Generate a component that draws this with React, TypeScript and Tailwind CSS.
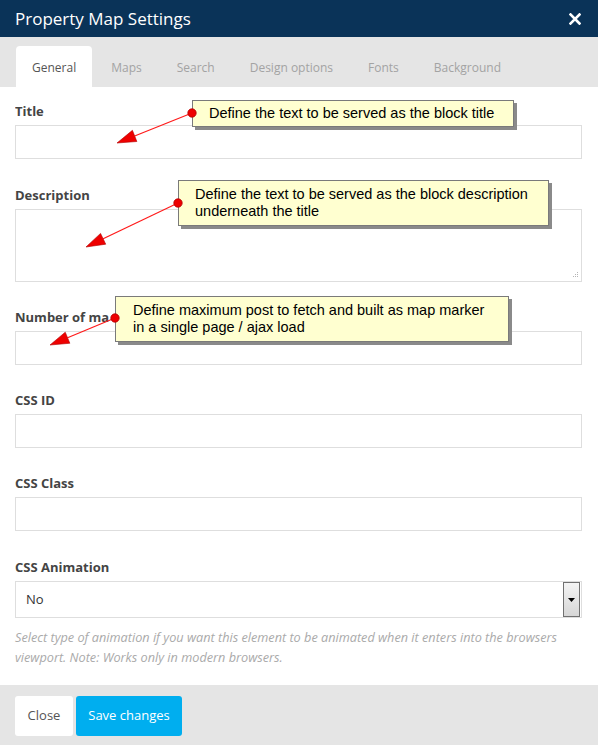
import React from 'react';

const tabs = ['General', 'Maps', 'Search', 'Design options', 'Fonts', 'Background'];

type Pt = [number, number];

const Arrow: React.FC<{ from: Pt; to: Pt }> = ({ from, to }) => {
  const dx = to[0] - from[0];
  const dy = to[1] - from[1];
  const len = Math.sqrt(dx * dx + dy * dy);
  const ux = dx / len;
  const uy = dy / len;
  const head = 19;
  const half = 6;
  const bx = to[0] - ux * head;
  const by = to[1] - uy * head;
  const p1 = `${bx - uy * half},${by + ux * half}`;
  const p2 = `${bx + uy * half},${by - ux * half}`;
  return (
    <g>
      <line x1={from[0]} y1={from[1]} x2={bx} y2={by} stroke="#ff1a1a" strokeWidth={1.2} />
      <polygon points={`${to[0]},${to[1]} ${p1} ${p2}`} fill="#ee0000" stroke="#b00000" strokeWidth={0.6} />
      <circle cx={from[0]} cy={from[1]} r={4.2} fill="#ee0000" stroke="#b00000" strokeWidth={0.8} />
    </g>
  );
};

const Field: React.FC<{ label: string; gap: string; children: React.ReactNode }> = ({ label, gap, children }) => (
  <div className={gap}>
    <label className="block h-5 leading-5 mb-1 text-[13px] font-bold text-[#444] whitespace-nowrap overflow-hidden">{label}</label>
    {children}
  </div>
);

const inputCls = 'block w-full h-[34px] border border-[#dedede] bg-white';

const App: React.FC = () => {
  return (
    <div className="relative w-[598px] h-[745px] overflow-hidden bg-white font-['Open_Sans',sans-serif]">
      {/* header */}
      <div className="h-[37px] bg-[#0a3358] flex items-center justify-between pl-[15px] pr-[17px]">
        <h1 className="text-[17px] text-white leading-none">Property Map Settings</h1>
        <svg width="12" height="12" viewBox="0 0 12 12">
          <path d="M1.5 1.5 L10.5 10.5 M10.5 1.5 L1.5 10.5" stroke="white" strokeWidth="2.6" strokeLinecap="square" />
        </svg>
      </div>

      {/* tabs */}
      <div className="h-[50px] bg-[#e5e5e5] flex items-end pl-4 gap-[3px]">
        {tabs.map((t, i) => (
          <div
            key={t}
            className={
              i === 0
                ? 'h-[41px] px-4 pt-[3px] flex items-center bg-white rounded-t-[4px] text-[12px] text-[#555]'
                : 'h-[41px] px-4 pt-[3px] flex items-center text-[12px] text-[#a3a3a3]'
            }
          >
            {t}
          </div>
        ))}
      </div>

      {/* body */}
      <div className="pt-[14px] pl-[15px] pr-4 pb-[18px]">
        <Field label="Title" gap="">
          <div className={inputCls} />
        </Field>
        <Field label="Description" gap="mt-[26px]">
          <div className="relative w-full h-[73px] border border-[#dedede] bg-white">
            <svg className="absolute right-[2px] bottom-[2px]" width="8" height="8" viewBox="0 0 8 8">
              <g fill="#b5b5b5">
                <rect x="6" y="1" width="1" height="1" />
                <rect x="4" y="3" width="1" height="1" />
                <rect x="6" y="3" width="1" height="1" />
                <rect x="2" y="5" width="1" height="1" />
                <rect x="4" y="5" width="1" height="1" />
                <rect x="6" y="5" width="1" height="1" />
              </g>
            </svg>
          </div>
        </Field>
        <Field label="Number of ma" gap="mt-[25px]">
          <div className={inputCls} />
        </Field>
        <Field label="CSS ID" gap="mt-[25px]">
          <div className={inputCls} />
        </Field>
        <Field label="CSS Class" gap="mt-[25px]">
          <div className={inputCls} />
        </Field>
        <Field label="CSS Animation" gap="mt-[26px]">
          <div className="flex items-center w-full h-[37px] border border-[#dedede] bg-white pl-[10px] pr-[1px]">
            <span className="flex-1 text-[13px] text-[#333]">No</span>
            <div className="w-[17px] h-[35px] border border-[#707070] bg-gradient-to-b from-[#f4f4f4] to-[#d6d6d6] flex items-center justify-center">
              <svg width="7" height="4" viewBox="0 0 7 4">
                <path d="M0 0 H7 L3.5 4 Z" fill="#000" />
              </svg>
            </div>
          </div>
        </Field>
        <p className="mt-[9px] max-w-[550px] text-[12.7px] leading-5 italic text-[#aaa]">
          Select type of animation if you want this element to be animated when it enters into the browsers viewport. Note: Works only in modern browsers.
        </p>
      </div>

      {/* footer */}
      <div className="absolute left-0 right-0 bottom-0 h-[60px] bg-[#e5e5e5] flex items-start pt-[11px] pl-[15px] gap-[3px]">
        <button className="h-10 w-[58px] bg-white rounded-[3px] text-[13px] text-[#555]">Close</button>
        <button className="h-10 w-[106px] bg-[#00aeef] rounded-[3px] text-[13px] text-white">Save changes</button>
      </div>

      {/* annotation callouts */}
      <div className="absolute left-[192px] top-[100px] w-[322px] h-[27px] bg-[#ffffd0] border border-[#7a7a7a] shadow-[3px_3px_0_#8a8a8a] pl-4 flex items-center font-['Liberation_Sans',Arial,sans-serif] text-[14.5px] text-black leading-[17px]">
        Define the text to be served as the block title
      </div>
      <div className="absolute left-[178px] top-[180px] w-[371px] h-[46px] bg-[#ffffd0] border border-[#7a7a7a] shadow-[3px_3px_0_#8a8a8a] pl-4 pt-[5px] font-['Liberation_Sans',Arial,sans-serif] text-[14.5px] text-black leading-[17px]">
        Define the text to be served as the block description
        <br />
        underneath the title
      </div>
      <div className="absolute left-[115px] top-[296px] w-[394px] h-[46px] bg-[#ffffd0] border border-[#7a7a7a] shadow-[3px_3px_0_#8a8a8a] pl-[17px] pt-[5px] font-['Liberation_Sans',Arial,sans-serif] text-[14.5px] text-black leading-[17px]">
        Define maximum post to fetch and built as map marker
        <br />
        in a single page / ajax load
      </div>

      <svg className="absolute left-0 top-0 pointer-events-none" width="598" height="745">
        <Arrow from={[192, 113]} to={[117, 143]} />
        <Arrow from={[178, 203]} to={[86, 247]} />
        <Arrow from={[115, 318]} to={[50, 345]} />
      </svg>
    </div>
  );
};

export default App;
